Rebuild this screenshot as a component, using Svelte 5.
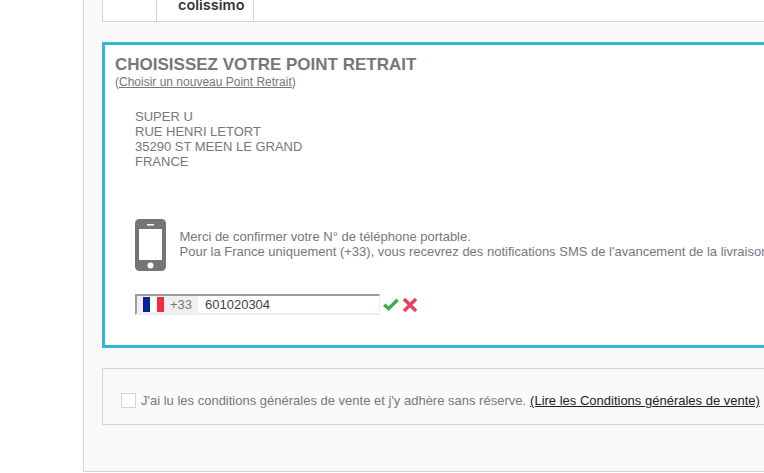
<script lang="ts">
  let phone = $state('601020304');
  let accepted = $state(false);
</script>

<div class="page">
  <main class="panel">
    <div class="carrier">
      <div class="cell first"></div>
      <div class="cell logo">colissimo</div>
    </div>

    <section class="relay">
      <h2>CHOISISSEZ VOTRE POINT RETRAIT</h2>
      <p class="change">(<a href="#relay">Choisir un nouveau Point Retrait</a>)</p>

      <address>
        SUPER U<br />
        RUE HENRI LETORT<br />
        35290 ST MEEN LE GRAND<br />
        FRANCE
      </address>

      <div class="notice">
        <svg class="mobile" width="31" height="52" viewBox="0 0 31 52" aria-hidden="true">
          <rect width="31" height="52" rx="4.5" fill="#757575" />
          <rect x="4" y="10" width="23" height="31" fill="#fff" />
          <rect x="12" y="5" width="7" height="1.5" fill="#fff" />
          <circle cx="15.5" cy="46.5" r="3" fill="#fff" />
        </svg>
        <p>
          Merci de confirmer votre N° de téléphone portable.<br />
          Pour la France uniquement (+33), vous recevrez des notifications SMS de l'avancement de la livraison.
        </p>
      </div>

      <div class="phone-row">
        <div class="phone">
          <span class="prefix">
            <span class="flag"><i class="blue"></i><i class="white"></i><i class="red"></i></span>
            +33
          </span>
          <input bind:value={phone} type="text" />
        </div>
        <svg class="status" width="16" height="13" viewBox="0 0 16 13" aria-hidden="true">
          <path d="M1.2 6.8 L5.6 10.6 L14.6 1.8" fill="none" stroke="#3aae4f" stroke-width="3.4" />
        </svg>
        <svg class="status" width="16" height="16" viewBox="0 0 16 16" aria-hidden="true">
          <path d="M2 2 L14 14 M14 2 L2 14" fill="none" stroke="#e8415f" stroke-width="3.4" />
        </svg>
      </div>
    </section>

    <section class="terms">
      <label>
        <input bind:checked={accepted} type="checkbox" />
        <span class="box"></span>
        <span>J'ai lu les conditions générales de vente et j'y adhère sans réserve.</span>
      </label>
      <a href="#terms">(Lire les Conditions générales de vente)</a>
    </section>
  </main>
</div>

<style>
  :global(body) {
    background: #fff;
    font-family: "Liberation Sans", Arial, sans-serif;
  }

  .page {
    width: 764px;
    height: 473px;
    overflow: hidden;
    padding-left: 83px;
    box-sizing: border-box;
  }

  .panel {
    width: 900px;
    height: 472px;
    box-sizing: border-box;
    padding: 0 0 0 18px;
    border-left: 1px solid #d4d4d4;
    border-bottom: 1px solid #d4d4d4;
    background: #fafafa;
    color: #777;
    font-size: 13px;
    line-height: 15px;
  }

  .carrier {
    display: flex;
    height: 21px;
    border: 1px solid #d4d4d4;
    border-top: 0;
    background: #fff;
  }

  .cell {
    border-right: 1px solid #d4d4d4;
    box-sizing: border-box;
  }

  .first {
    width: 54px;
  }

  .logo {
    width: 97px;
    padding-left: 21px;
    overflow: hidden;
    color: #333;
    font-family: Inter, sans-serif;
    font-size: 14.5px;
    font-weight: 600;
    line-height: 9px;
  }

  .relay {
    box-sizing: border-box;
    height: 306px;
    margin-top: 20px;
    padding: 10px 10px 0;
    border: 3px solid #30b7d3;
    background: #fff;
  }

  h2 {
    margin: 0;
    font-size: 17px;
    font-weight: 700;
    line-height: 19px;
    color: #777;
  }

  .change {
    margin: 1px 0 0;
    font-size: 12px;
    line-height: 15px;
  }

  .change a {
    color: #777;
  }

  address {
    margin: 19px 0 0 20px;
    font-style: normal;
  }

  .notice {
    display: flex;
    align-items: flex-start;
    gap: 13.5px;
    margin: 50px 0 0 20px;
  }

  .notice p {
    margin: 10px 0 0;
  }

  .mobile {
    flex: none;
  }

  .phone-row {
    display: flex;
    align-items: center;
    gap: 3px;
    margin: 23px 0 0 20px;
  }

  .phone {
    display: flex;
    width: 245px;
    height: 21px;
    box-sizing: border-box;
    border: 2px solid #eee;
    border-top-color: #9e9e9e;
    border-left-color: #9e9e9e;
    border-right-width: 1px;
    background: #fff;
  }

  .prefix {
    display: flex;
    align-items: center;
    gap: 6px;
    width: 61px;
    padding-left: 6px;
    box-sizing: border-box;
    background: #f0f0f0;
    color: #777;
  }

  .flag {
    display: flex;
    width: 21px;
    height: 15px;
    background: #fff;
  }

  .flag i {
    flex: 1;
  }

  .blue {
    background: #002495;
  }

  .white {
    background: #fff;
  }

  .red {
    background: #f42a41;
  }

  .phone input {
    flex: 1;
    min-width: 0;
    padding: 0 0 0 7px;
    border: 0;
    outline: 0;
    background: transparent;
    color: #444;
    font: 13px "Liberation Sans", Arial, sans-serif;
  }

  .terms {
    display: flex;
    align-items: center;
    gap: 4px;
    box-sizing: border-box;
    height: 57px;
    margin-top: 20px;
    padding: 8px 0 0 18px;
    border: 1px solid #d4d4d4;
    font-size: 13px;
    white-space: nowrap;
  }

  .terms label {
    display: flex;
    align-items: center;
    gap: 5px;
  }

  .terms input {
    position: absolute;
    opacity: 0;
  }

  .box {
    width: 13px;
    height: 13px;
    border: 1px solid #d4d4d4;
    background: #fff;
  }

  .terms a {
    color: #222;
  }
</style>
